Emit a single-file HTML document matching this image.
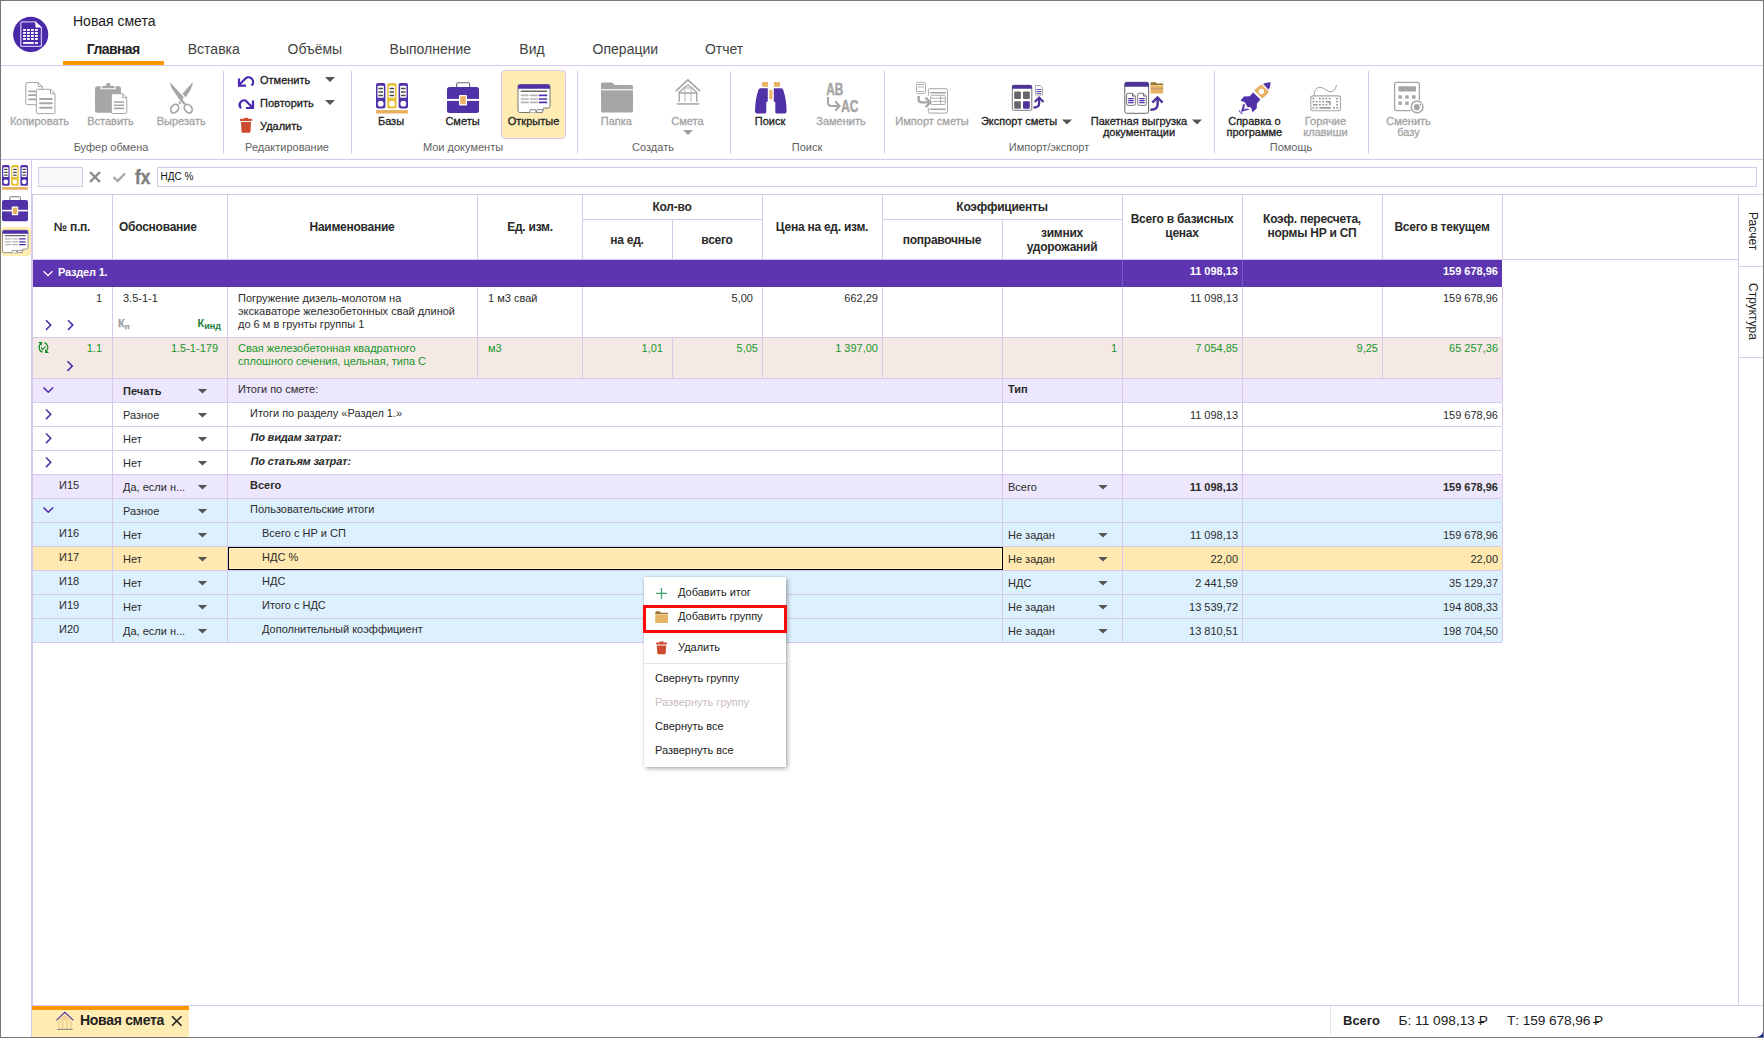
<!DOCTYPE html><html><head><meta charset="utf-8"><title>Новая смета</title><style>
html,body{margin:0;padding:0;}
body{width:1764px;height:1038px;overflow:hidden;position:relative;background:#fff;font-family:"Liberation Sans",sans-serif;}
.a{position:absolute;}
.t{position:absolute;white-space:nowrap;}
.rub{position:relative;display:inline-block;}
.rub::after{content:'';position:absolute;left:-0.6px;width:5.6px;top:9.6px;height:1.1px;background:currentColor;}
svg.ic{position:absolute;left:0;top:0;}
</style></head><body><div class="a" style="left:0px;top:0px;width:1764px;height:1038px;background:#fff;"></div><div class="t" style="left:73px;top:12.75px;font-size:14px;line-height:17px;font-weight:400;color:#212121;">Новая смета</div><div class="t" style="left:53.2px;width:120px;text-align:center;top:40.75px;font-size:14px;line-height:17px;font-weight:700;color:#212121;letter-spacing:-0.6px;">Главная</div><div class="t" style="left:153.8px;width:120px;text-align:center;top:40.75px;font-size:14px;line-height:17px;font-weight:400;color:#424242;">Вставка</div><div class="t" style="left:254.85000000000002px;width:120px;text-align:center;top:40.75px;font-size:14px;line-height:17px;font-weight:400;color:#424242;">Объёмы</div><div class="t" style="left:370.35px;width:120px;text-align:center;top:40.75px;font-size:14px;line-height:17px;font-weight:400;color:#424242;">Выполнение</div><div class="t" style="left:472.0px;width:120px;text-align:center;top:40.75px;font-size:14px;line-height:17px;font-weight:400;color:#424242;">Вид</div><div class="t" style="left:565.35px;width:120px;text-align:center;top:40.75px;font-size:14px;line-height:17px;font-weight:400;color:#424242;">Операции</div><div class="t" style="left:664.05px;width:120px;text-align:center;top:40.75px;font-size:14px;line-height:17px;font-weight:400;color:#424242;">Отчет</div><div class="a" style="left:63px;top:61px;width:101px;height:4px;background:#ff9800;"></div><div class="a" style="left:1px;top:65px;width:1762px;height:1px;background:#d6c9ec;"></div><div class="a" style="left:1px;top:159px;width:1762px;height:1px;background:#d6c9ec;"></div><div class="a" style="left:223px;top:71px;width:1px;height:83px;background:#d6c9ec;"></div><div class="a" style="left:351px;top:71px;width:1px;height:83px;background:#d6c9ec;"></div><div class="a" style="left:577px;top:71px;width:1px;height:83px;background:#d6c9ec;"></div><div class="a" style="left:730px;top:71px;width:1px;height:83px;background:#d6c9ec;"></div><div class="a" style="left:884px;top:71px;width:1px;height:83px;background:#d6c9ec;"></div><div class="a" style="left:1214px;top:71px;width:1px;height:83px;background:#d6c9ec;"></div><div class="a" style="left:1368px;top:71px;width:1px;height:83px;background:#d6c9ec;"></div><div class="t" style="left:31.0px;width:160px;text-align:center;top:140.75px;font-size:11px;line-height:13px;font-weight:400;color:#616161;">Буфер обмена</div><div class="t" style="left:207.0px;width:160px;text-align:center;top:140.75px;font-size:11px;line-height:13px;font-weight:400;color:#616161;">Редактирование</div><div class="t" style="left:383.0px;width:160px;text-align:center;top:140.75px;font-size:11px;line-height:13px;font-weight:400;color:#616161;">Мои документы</div><div class="t" style="left:573.0px;width:160px;text-align:center;top:140.75px;font-size:11px;line-height:13px;font-weight:400;color:#616161;">Создать</div><div class="t" style="left:727.0px;width:160px;text-align:center;top:140.75px;font-size:11px;line-height:13px;font-weight:400;color:#616161;">Поиск</div><div class="t" style="left:969.0px;width:160px;text-align:center;top:140.75px;font-size:11px;line-height:13px;font-weight:400;color:#616161;">Импорт/экспорт</div><div class="t" style="left:1211.0px;width:160px;text-align:center;top:140.75px;font-size:11px;line-height:13px;font-weight:400;color:#616161;">Помощь</div><div class="t" style="left:-30.5px;width:140px;text-align:center;top:114.75px;font-size:11px;line-height:13px;font-weight:400;color:#a3a3a3;-webkit-text-stroke:0.3px #a3a3a3;">Копировать</div><div class="t" style="left:40.5px;width:140px;text-align:center;top:114.75px;font-size:11px;line-height:13px;font-weight:400;color:#a3a3a3;-webkit-text-stroke:0.3px #a3a3a3;">Вставить</div><div class="t" style="left:111.19999999999999px;width:140px;text-align:center;top:114.75px;font-size:11px;line-height:13px;font-weight:400;color:#a3a3a3;-webkit-text-stroke:0.3px #a3a3a3;">Вырезать</div><div class="t" style="left:321.0px;width:140px;text-align:center;top:114.75px;font-size:11px;line-height:13px;font-weight:400;color:#212121;-webkit-text-stroke:0.3px #212121;">Базы</div><div class="t" style="left:392.5px;width:140px;text-align:center;top:114.75px;font-size:11px;line-height:13px;font-weight:400;color:#212121;-webkit-text-stroke:0.3px #212121;">Сметы</div><div class="a" style="left:501px;top:70px;width:65px;height:69px;background:#ffecb3;border:1px solid #d8c8ee;border-radius:4px;box-sizing:border-box;"></div><div class="t" style="left:463.5px;width:140px;text-align:center;top:114.75px;font-size:11px;line-height:13px;font-weight:400;color:#212121;-webkit-text-stroke:0.3px #212121;">Открытые</div><div class="t" style="left:546.4px;width:140px;text-align:center;top:114.75px;font-size:11px;line-height:13px;font-weight:400;color:#a3a3a3;-webkit-text-stroke:0.3px #a3a3a3;">Папка</div><div class="t" style="left:617.5px;width:140px;text-align:center;top:114.75px;font-size:11px;line-height:13px;font-weight:400;color:#a3a3a3;-webkit-text-stroke:0.3px #a3a3a3;">Смета</div><div class="t" style="left:700.0px;width:140px;text-align:center;top:114.75px;font-size:11px;line-height:13px;font-weight:400;color:#212121;-webkit-text-stroke:0.3px #212121;">Поиск</div><div class="t" style="left:771.0px;width:140px;text-align:center;top:114.75px;font-size:11px;line-height:13px;font-weight:400;color:#a3a3a3;-webkit-text-stroke:0.3px #a3a3a3;">Заменить</div><div class="t" style="left:862.0px;width:140px;text-align:center;top:114.75px;font-size:11px;line-height:13px;font-weight:400;color:#a3a3a3;-webkit-text-stroke:0.3px #a3a3a3;">Импорт сметы</div><div class="t" style="left:949.0px;width:140px;text-align:center;top:114.75px;font-size:11px;line-height:13px;font-weight:400;color:#212121;-webkit-text-stroke:0.3px #212121;">Экспорт сметы</div><div class="t" style="left:1069.0px;width:140px;text-align:center;top:114.75px;font-size:11px;line-height:13px;font-weight:400;color:#212121;-webkit-text-stroke:0.3px #212121;">Пакетная выгрузка</div><div class="t" style="left:1069.0px;width:140px;text-align:center;top:125.75px;font-size:11px;line-height:13px;font-weight:400;color:#212121;-webkit-text-stroke:0.3px #212121;">документации</div><div class="t" style="left:1184.4px;width:140px;text-align:center;top:114.75px;font-size:11px;line-height:13px;font-weight:400;color:#212121;-webkit-text-stroke:0.3px #212121;">Справка о</div><div class="t" style="left:1184.4px;width:140px;text-align:center;top:125.75px;font-size:11px;line-height:13px;font-weight:400;color:#212121;-webkit-text-stroke:0.3px #212121;">программе</div><div class="t" style="left:1255.5px;width:140px;text-align:center;top:114.75px;font-size:11px;line-height:13px;font-weight:400;color:#a3a3a3;-webkit-text-stroke:0.3px #a3a3a3;">Горячие</div><div class="t" style="left:1255.5px;width:140px;text-align:center;top:125.75px;font-size:11px;line-height:13px;font-weight:400;color:#a3a3a3;-webkit-text-stroke:0.3px #a3a3a3;">клавиши</div><div class="t" style="left:1338.5px;width:140px;text-align:center;top:114.75px;font-size:11px;line-height:13px;font-weight:400;color:#a3a3a3;-webkit-text-stroke:0.3px #a3a3a3;">Сменить</div><div class="t" style="left:1338.5px;width:140px;text-align:center;top:125.75px;font-size:11px;line-height:13px;font-weight:400;color:#a3a3a3;-webkit-text-stroke:0.3px #a3a3a3;">базу</div><div class="t" style="left:260px;top:73.75px;font-size:11px;line-height:13px;font-weight:400;color:#212121;-webkit-text-stroke:0.3px #212121;">Отменить</div><div class="t" style="left:260px;top:96.75px;font-size:11px;line-height:13px;font-weight:400;color:#212121;-webkit-text-stroke:0.3px #212121;">Повторить</div><div class="t" style="left:260px;top:119.75px;font-size:11px;line-height:13px;font-weight:400;color:#212121;-webkit-text-stroke:0.3px #212121;">Удалить</div><div class="a" style="left:31px;top:160px;width:1px;height:878px;background:#d6c9ec;"></div><div class="a" style="left:1px;top:226.5px;width:29.5px;height:29.5px;background:#ffecb3;border-radius:4px;"></div><div class="a" style="left:38px;top:167px;width:45px;height:20px;background:#f8f8f8;border:1px solid #d6c9ec;box-sizing:border-box;"></div><div class="a" style="left:157px;top:167px;width:1600px;height:20px;background:#fff;border:1px solid #d6c9ec;box-sizing:border-box;"></div><div class="t" style="left:160.5px;top:170.75px;font-size:10px;line-height:12px;font-weight:400;color:#111;">НДС %</div><div class="a" style="left:32px;top:194px;width:1732px;height:1px;background:#d6c9ec;"></div><div class="a" style="left:32px;top:194px;width:1px;height:811px;background:#d6c9ec;"></div><div class="a" style="left:1738px;top:194px;width:1px;height:811px;background:#d6c9ec;"></div><div class="a" style="left:32px;top:259px;width:1706px;height:1px;background:#d6c9ec;"></div><div class="a" style="left:1738px;top:266px;width:26px;height:1px;background:#d6c9ec;"></div><div class="a" style="left:1738px;top:357px;width:26px;height:1px;background:#d6c9ec;"></div><div class="t" style="left:1752.5px;top:-10.25px;font-size:11px;line-height:13px;font-weight:400;color:#212121;"></div><div class="t" style="left:1742px;top:211.5px;width:22px;height:40px;font-size:12px;line-height:22px;color:#212121;writing-mode:vertical-rl;">Расчет</div><div class="t" style="left:1742px;top:283px;width:22px;height:70px;font-size:12px;line-height:22px;color:#212121;writing-mode:vertical-rl;">Структура</div><div class="a" style="left:112px;top:194px;width:1px;height:65px;background:#d6c9ec;"></div><div class="a" style="left:227px;top:194px;width:1px;height:65px;background:#d6c9ec;"></div><div class="a" style="left:477px;top:194px;width:1px;height:65px;background:#d6c9ec;"></div><div class="a" style="left:582px;top:194px;width:1px;height:65px;background:#d6c9ec;"></div><div class="a" style="left:672px;top:219px;width:1px;height:40px;background:#d6c9ec;"></div><div class="a" style="left:762px;top:194px;width:1px;height:65px;background:#d6c9ec;"></div><div class="a" style="left:882px;top:194px;width:1px;height:65px;background:#d6c9ec;"></div><div class="a" style="left:1002px;top:219px;width:1px;height:40px;background:#d6c9ec;"></div><div class="a" style="left:1122px;top:194px;width:1px;height:65px;background:#d6c9ec;"></div><div class="a" style="left:1242px;top:194px;width:1px;height:65px;background:#d6c9ec;"></div><div class="a" style="left:1382px;top:194px;width:1px;height:65px;background:#d6c9ec;"></div><div class="a" style="left:1502px;top:194px;width:1px;height:65px;background:#d6c9ec;"></div><div class="a" style="left:582px;top:219px;width:180px;height:1px;background:#d6c9ec;"></div><div class="a" style="left:882px;top:219px;width:240px;height:1px;background:#d6c9ec;"></div><div class="t" style="left:-28.0px;width:200px;text-align:center;top:220.25px;font-size:12px;line-height:14px;font-weight:700;color:#2a2a2a;letter-spacing:-0.25px;">№ п.п.</div><div class="t" style="left:119px;top:220.25px;font-size:12px;line-height:14px;font-weight:700;color:#2a2a2a;letter-spacing:-0.25px;">Обоснование</div><div class="t" style="left:252.0px;width:200px;text-align:center;top:220.25px;font-size:12px;line-height:14px;font-weight:700;color:#2a2a2a;letter-spacing:-0.25px;">Наименование</div><div class="t" style="left:430.0px;width:200px;text-align:center;top:220.25px;font-size:12px;line-height:14px;font-weight:700;color:#2a2a2a;letter-spacing:-0.25px;">Ед. изм.</div><div class="t" style="left:572.0px;width:200px;text-align:center;top:200.25px;font-size:12px;line-height:14px;font-weight:700;color:#2a2a2a;letter-spacing:-0.25px;">Кол-во</div><div class="t" style="left:527.0px;width:200px;text-align:center;top:233.25px;font-size:12px;line-height:14px;font-weight:700;color:#2a2a2a;letter-spacing:-0.25px;">на ед.</div><div class="t" style="left:617.0px;width:200px;text-align:center;top:233.25px;font-size:12px;line-height:14px;font-weight:700;color:#2a2a2a;letter-spacing:-0.25px;">всего</div><div class="t" style="left:722.0px;width:200px;text-align:center;top:220.25px;font-size:12px;line-height:14px;font-weight:700;color:#2a2a2a;letter-spacing:-0.25px;">Цена на ед. изм.</div><div class="t" style="left:902.0px;width:200px;text-align:center;top:200.25px;font-size:12px;line-height:14px;font-weight:700;color:#2a2a2a;letter-spacing:-0.25px;">Коэффициенты</div><div class="t" style="left:842.0px;width:200px;text-align:center;top:233.25px;font-size:12px;line-height:14px;font-weight:700;color:#2a2a2a;letter-spacing:-0.25px;">поправочные</div><div class="t" style="left:962.0px;width:200px;text-align:center;top:226.25px;font-size:12px;line-height:14px;font-weight:700;color:#2a2a2a;letter-spacing:-0.25px;">зимних</div><div class="t" style="left:962.0px;width:200px;text-align:center;top:240.25px;font-size:12px;line-height:14px;font-weight:700;color:#2a2a2a;letter-spacing:-0.25px;">удорожаний</div><div class="t" style="left:1082.0px;width:200px;text-align:center;top:212.25px;font-size:12px;line-height:14px;font-weight:700;color:#2a2a2a;letter-spacing:-0.25px;">Всего в базисных</div><div class="t" style="left:1082.0px;width:200px;text-align:center;top:226.25px;font-size:12px;line-height:14px;font-weight:700;color:#2a2a2a;letter-spacing:-0.25px;">ценах</div><div class="t" style="left:1212.0px;width:200px;text-align:center;top:212.25px;font-size:12px;line-height:14px;font-weight:700;color:#2a2a2a;letter-spacing:-0.25px;">Коэф. пересчета,</div><div class="t" style="left:1212.0px;width:200px;text-align:center;top:226.25px;font-size:12px;line-height:14px;font-weight:700;color:#2a2a2a;letter-spacing:-0.25px;">нормы НР и СП</div><div class="t" style="left:1342.0px;width:200px;text-align:center;top:220.25px;font-size:12px;line-height:14px;font-weight:700;color:#2a2a2a;letter-spacing:-0.25px;">Всего в текущем</div><div class="a" style="left:33px;top:260px;width:1469px;height:27px;background:#5e35b1;"></div><div class="t" style="left:58px;top:265.75px;font-size:11px;line-height:13px;font-weight:700;color:#fff;letter-spacing:-0.2px;">Раздел 1.</div><div class="t" style="right:526px;top:264.75px;font-size:11px;line-height:13px;font-weight:700;color:#fff;">11 098,13</div><div class="t" style="right:266px;top:264.75px;font-size:11px;line-height:13px;font-weight:700;color:#fff;">159 678,96</div><div class="a" style="left:1122px;top:260px;width:1px;height:27px;background:#7a5cc0;"></div><div class="a" style="left:1242px;top:260px;width:1px;height:27px;background:#7a5cc0;"></div><div class="a" style="left:112px;top:287px;width:1px;height:50px;background:#d6c9ec;"></div><div class="a" style="left:227px;top:287px;width:1px;height:50px;background:#d6c9ec;"></div><div class="a" style="left:477px;top:287px;width:1px;height:50px;background:#d6c9ec;"></div><div class="a" style="left:582px;top:287px;width:1px;height:50px;background:#d6c9ec;"></div><div class="a" style="left:762px;top:287px;width:1px;height:50px;background:#d6c9ec;"></div><div class="a" style="left:882px;top:287px;width:1px;height:50px;background:#d6c9ec;"></div><div class="a" style="left:1002px;top:287px;width:1px;height:50px;background:#d6c9ec;"></div><div class="a" style="left:1122px;top:287px;width:1px;height:50px;background:#d6c9ec;"></div><div class="a" style="left:1242px;top:287px;width:1px;height:50px;background:#d6c9ec;"></div><div class="a" style="left:1382px;top:287px;width:1px;height:50px;background:#d6c9ec;"></div><div class="a" style="left:1502px;top:287px;width:1px;height:50px;background:#d6c9ec;"></div><div class="a" style="left:32px;top:337px;width:1470px;height:1px;background:#d6c9ec;"></div><div class="a" style="left:32px;top:378px;width:1470px;height:1px;background:#d6c9ec;"></div><div class="t" style="right:1662px;top:291.75px;font-size:11px;line-height:13px;font-weight:400;color:#2b2b2b;">1</div><div class="t" style="left:123px;top:291.75px;font-size:11px;line-height:13px;font-weight:400;color:#2b2b2b;">3.5-1-1</div><div class="t" style="left:118px;top:316.75px;font-size:11px;line-height:13px;font-weight:700;color:#9e9e9e;-webkit-text-stroke:0.25px #9e9e9e;">К<span style="font-size:8px;position:relative;top:2.5px">п</span></div><div class="t" style="right:1543px;top:316.75px;font-size:11px;line-height:13px;font-weight:700;color:#1b7d3c;">К<span style="font-size:9px;position:relative;top:2.2px">инд</span></div><div class="t" style="left:238px;top:291.75px;font-size:11px;line-height:13px;font-weight:400;color:#2b2b2b;">Погружение дизель-молотом на</div><div class="t" style="left:238px;top:304.75px;font-size:11px;line-height:13px;font-weight:400;color:#2b2b2b;">экскаваторе железобетонных свай длиной</div><div class="t" style="left:238px;top:317.75px;font-size:11px;line-height:13px;font-weight:400;color:#2b2b2b;">до 6 м в грунты группы 1</div><div class="t" style="left:488px;top:291.75px;font-size:11px;line-height:13px;font-weight:400;color:#2b2b2b;">1 м3 свай</div><div class="t" style="right:1011px;top:291.75px;font-size:11px;line-height:13px;font-weight:400;color:#2b2b2b;">5,00</div><div class="t" style="right:886px;top:291.75px;font-size:11px;line-height:13px;font-weight:400;color:#2b2b2b;">662,29</div><div class="t" style="right:526px;top:291.75px;font-size:11px;line-height:13px;font-weight:400;color:#2b2b2b;">11 098,13</div><div class="t" style="right:266px;top:291.75px;font-size:11px;line-height:13px;font-weight:400;color:#2b2b2b;">159 678,96</div><div class="a" style="left:33px;top:338px;width:1469px;height:40px;background:#f5e9e6;"></div><div class="a" style="left:112px;top:338px;width:1px;height:40px;background:#d6c9ec;"></div><div class="a" style="left:227px;top:338px;width:1px;height:40px;background:#d6c9ec;"></div><div class="a" style="left:477px;top:338px;width:1px;height:40px;background:#d6c9ec;"></div><div class="a" style="left:582px;top:338px;width:1px;height:40px;background:#d6c9ec;"></div><div class="a" style="left:672px;top:338px;width:1px;height:40px;background:#d6c9ec;"></div><div class="a" style="left:762px;top:338px;width:1px;height:40px;background:#d6c9ec;"></div><div class="a" style="left:882px;top:338px;width:1px;height:40px;background:#d6c9ec;"></div><div class="a" style="left:1002px;top:338px;width:1px;height:40px;background:#d6c9ec;"></div><div class="a" style="left:1122px;top:338px;width:1px;height:40px;background:#d6c9ec;"></div><div class="a" style="left:1242px;top:338px;width:1px;height:40px;background:#d6c9ec;"></div><div class="a" style="left:1382px;top:338px;width:1px;height:40px;background:#d6c9ec;"></div><div class="a" style="left:1502px;top:338px;width:1px;height:40px;background:#d6c9ec;"></div><div class="a" style="left:32px;top:378px;width:1470px;height:1px;background:#d6c9ec;"></div><div class="t" style="right:1662px;top:341.75px;font-size:11px;line-height:13px;font-weight:400;color:#15962a;">1.1</div><div class="t" style="right:1546px;top:341.75px;font-size:11px;line-height:13px;font-weight:400;color:#15962a;">1.5-1-179</div><div class="t" style="left:238px;top:341.75px;font-size:11px;line-height:13px;font-weight:400;color:#15962a;">Свая железобетонная квадратного</div><div class="t" style="left:238px;top:354.75px;font-size:11px;line-height:13px;font-weight:400;color:#15962a;">сплошного сечения, цельная, типа С</div><div class="t" style="left:488px;top:341.75px;font-size:11px;line-height:13px;font-weight:400;color:#15962a;">м3</div><div class="t" style="right:1101px;top:341.75px;font-size:11px;line-height:13px;font-weight:400;color:#15962a;">1,01</div><div class="t" style="right:1006px;top:341.75px;font-size:11px;line-height:13px;font-weight:400;color:#15962a;">5,05</div><div class="t" style="right:886px;top:341.75px;font-size:11px;line-height:13px;font-weight:400;color:#15962a;">1 397,00</div><div class="t" style="right:647px;top:341.75px;font-size:11px;line-height:13px;font-weight:400;color:#15962a;">1</div><div class="t" style="right:526px;top:341.75px;font-size:11px;line-height:13px;font-weight:400;color:#15962a;">7 054,85</div><div class="t" style="right:386px;top:341.75px;font-size:11px;line-height:13px;font-weight:400;color:#15962a;">9,25</div><div class="t" style="right:266px;top:341.75px;font-size:11px;line-height:13px;font-weight:400;color:#15962a;">65 257,36</div><div class="a" style="left:33px;top:379px;width:1469px;height:23px;background:#ece7fc;"></div><div class="a" style="left:32px;top:402px;width:1470px;height:1px;background:#d6c9ec;"></div><div class="a" style="left:112px;top:379px;width:1px;height:23px;background:#d6c9ec;"></div><div class="a" style="left:227px;top:379px;width:1px;height:23px;background:#d6c9ec;"></div><div class="a" style="left:1002px;top:379px;width:1px;height:23px;background:#d6c9ec;"></div><div class="a" style="left:1122px;top:379px;width:1px;height:23px;background:#d6c9ec;"></div><div class="a" style="left:1242px;top:379px;width:1px;height:23px;background:#d6c9ec;"></div><div class="a" style="left:1502px;top:379px;width:1px;height:23px;background:#d6c9ec;"></div><div class="t" style="left:123px;top:384.75px;font-size:11px;line-height:13px;font-weight:700;color:#2b2b2b;">Печать</div><div class="t" style="left:238px;top:382.75px;font-size:11px;line-height:13px;font-weight:400;color:#2b2b2b;">Итоги по смете:</div><div class="t" style="left:1008px;top:382.75px;font-size:11px;line-height:13px;font-weight:700;color:#2b2b2b;">Тип</div><div class="a" style="left:32px;top:426px;width:1470px;height:1px;background:#d6c9ec;"></div><div class="a" style="left:112px;top:403px;width:1px;height:23px;background:#d6c9ec;"></div><div class="a" style="left:227px;top:403px;width:1px;height:23px;background:#d6c9ec;"></div><div class="a" style="left:1002px;top:403px;width:1px;height:23px;background:#d6c9ec;"></div><div class="a" style="left:1122px;top:403px;width:1px;height:23px;background:#d6c9ec;"></div><div class="a" style="left:1242px;top:403px;width:1px;height:23px;background:#d6c9ec;"></div><div class="a" style="left:1502px;top:403px;width:1px;height:23px;background:#d6c9ec;"></div><div class="t" style="left:123px;top:408.75px;font-size:11px;line-height:13px;font-weight:400;color:#2b2b2b;">Разное</div><div class="t" style="left:250px;top:406.75px;font-size:11px;line-height:13px;font-weight:400;color:#2b2b2b;">Итоги по разделу «Раздел 1.»</div><div class="t" style="right:526px;top:408.75px;font-size:11px;line-height:13px;font-weight:400;color:#2b2b2b;">11 098,13</div><div class="t" style="right:266px;top:408.75px;font-size:11px;line-height:13px;font-weight:400;color:#2b2b2b;">159 678,96</div><div class="a" style="left:32px;top:450px;width:1470px;height:1px;background:#d6c9ec;"></div><div class="a" style="left:112px;top:427px;width:1px;height:23px;background:#d6c9ec;"></div><div class="a" style="left:227px;top:427px;width:1px;height:23px;background:#d6c9ec;"></div><div class="a" style="left:1002px;top:427px;width:1px;height:23px;background:#d6c9ec;"></div><div class="a" style="left:1122px;top:427px;width:1px;height:23px;background:#d6c9ec;"></div><div class="a" style="left:1242px;top:427px;width:1px;height:23px;background:#d6c9ec;"></div><div class="a" style="left:1502px;top:427px;width:1px;height:23px;background:#d6c9ec;"></div><div class="t" style="left:123px;top:432.75px;font-size:11px;line-height:13px;font-weight:400;color:#2b2b2b;">Нет</div><div class="t" style="left:250px;top:430.75px;font-size:11px;line-height:13px;font-weight:700;color:#2b2b2b;transform:skewX(-11deg);transform-origin:0 78%;letter-spacing:-0.2px;">По видам затрат:</div><div class="a" style="left:32px;top:474px;width:1470px;height:1px;background:#d6c9ec;"></div><div class="a" style="left:112px;top:451px;width:1px;height:23px;background:#d6c9ec;"></div><div class="a" style="left:227px;top:451px;width:1px;height:23px;background:#d6c9ec;"></div><div class="a" style="left:1002px;top:451px;width:1px;height:23px;background:#d6c9ec;"></div><div class="a" style="left:1122px;top:451px;width:1px;height:23px;background:#d6c9ec;"></div><div class="a" style="left:1242px;top:451px;width:1px;height:23px;background:#d6c9ec;"></div><div class="a" style="left:1502px;top:451px;width:1px;height:23px;background:#d6c9ec;"></div><div class="t" style="left:123px;top:456.75px;font-size:11px;line-height:13px;font-weight:400;color:#2b2b2b;">Нет</div><div class="t" style="left:250px;top:454.75px;font-size:11px;line-height:13px;font-weight:700;color:#2b2b2b;transform:skewX(-11deg);transform-origin:0 78%;letter-spacing:-0.2px;">По статьям затрат:</div><div class="a" style="left:33px;top:475px;width:1469px;height:23px;background:#ece7fc;"></div><div class="a" style="left:32px;top:498px;width:1470px;height:1px;background:#d6c9ec;"></div><div class="a" style="left:112px;top:475px;width:1px;height:23px;background:#d6c9ec;"></div><div class="a" style="left:227px;top:475px;width:1px;height:23px;background:#d6c9ec;"></div><div class="a" style="left:1002px;top:475px;width:1px;height:23px;background:#d6c9ec;"></div><div class="a" style="left:1122px;top:475px;width:1px;height:23px;background:#d6c9ec;"></div><div class="a" style="left:1242px;top:475px;width:1px;height:23px;background:#d6c9ec;"></div><div class="a" style="left:1502px;top:475px;width:1px;height:23px;background:#d6c9ec;"></div><div class="t" style="left:59px;top:478.75px;font-size:11px;line-height:13px;font-weight:400;color:#2b2b2b;">И15</div><div class="t" style="left:123px;top:480.75px;font-size:11px;line-height:13px;font-weight:400;color:#2b2b2b;">Да, если н...</div><div class="t" style="left:250px;top:478.75px;font-size:11px;line-height:13px;font-weight:700;color:#2b2b2b;">Всего</div><div class="t" style="left:1008px;top:480.75px;font-size:11px;line-height:13px;font-weight:400;color:#2b2b2b;">Всего</div><div class="t" style="right:526px;top:480.75px;font-size:11px;line-height:13px;font-weight:700;color:#2b2b2b;">11 098,13</div><div class="t" style="right:266px;top:480.75px;font-size:11px;line-height:13px;font-weight:700;color:#2b2b2b;">159 678,96</div><div class="a" style="left:33px;top:499px;width:1469px;height:23px;background:#ddf0fd;"></div><div class="a" style="left:32px;top:522px;width:1470px;height:1px;background:#d6c9ec;"></div><div class="a" style="left:112px;top:499px;width:1px;height:23px;background:#d6c9ec;"></div><div class="a" style="left:227px;top:499px;width:1px;height:23px;background:#d6c9ec;"></div><div class="a" style="left:1002px;top:499px;width:1px;height:23px;background:#d6c9ec;"></div><div class="a" style="left:1122px;top:499px;width:1px;height:23px;background:#d6c9ec;"></div><div class="a" style="left:1242px;top:499px;width:1px;height:23px;background:#d6c9ec;"></div><div class="a" style="left:1502px;top:499px;width:1px;height:23px;background:#d6c9ec;"></div><div class="t" style="left:123px;top:504.75px;font-size:11px;line-height:13px;font-weight:400;color:#2b2b2b;">Разное</div><div class="t" style="left:250px;top:502.75px;font-size:11px;line-height:13px;font-weight:400;color:#2b2b2b;">Пользовательские итоги</div><div class="a" style="left:33px;top:523px;width:1469px;height:23px;background:#ddf0fd;"></div><div class="a" style="left:32px;top:546px;width:1470px;height:1px;background:#d6c9ec;"></div><div class="a" style="left:112px;top:523px;width:1px;height:23px;background:#d6c9ec;"></div><div class="a" style="left:227px;top:523px;width:1px;height:23px;background:#d6c9ec;"></div><div class="a" style="left:1002px;top:523px;width:1px;height:23px;background:#d6c9ec;"></div><div class="a" style="left:1122px;top:523px;width:1px;height:23px;background:#d6c9ec;"></div><div class="a" style="left:1242px;top:523px;width:1px;height:23px;background:#d6c9ec;"></div><div class="a" style="left:1502px;top:523px;width:1px;height:23px;background:#d6c9ec;"></div><div class="t" style="left:59px;top:526.75px;font-size:11px;line-height:13px;font-weight:400;color:#2b2b2b;">И16</div><div class="t" style="left:123px;top:528.75px;font-size:11px;line-height:13px;font-weight:400;color:#2b2b2b;">Нет</div><div class="t" style="left:262px;top:526.75px;font-size:11px;line-height:13px;font-weight:400;color:#2b2b2b;">Всего с НР и СП</div><div class="t" style="left:1008px;top:528.75px;font-size:11px;line-height:13px;font-weight:400;color:#2b2b2b;">Не задан</div><div class="t" style="right:526px;top:528.75px;font-size:11px;line-height:13px;font-weight:400;color:#2b2b2b;">11 098,13</div><div class="t" style="right:266px;top:528.75px;font-size:11px;line-height:13px;font-weight:400;color:#2b2b2b;">159 678,96</div><div class="a" style="left:33px;top:547px;width:1469px;height:23px;background:#ffe9b0;"></div><div class="a" style="left:32px;top:570px;width:1470px;height:1px;background:#d6c9ec;"></div><div class="a" style="left:112px;top:547px;width:1px;height:23px;background:#d6c9ec;"></div><div class="a" style="left:227px;top:547px;width:1px;height:23px;background:#d6c9ec;"></div><div class="a" style="left:1002px;top:547px;width:1px;height:23px;background:#d6c9ec;"></div><div class="a" style="left:1122px;top:547px;width:1px;height:23px;background:#d6c9ec;"></div><div class="a" style="left:1242px;top:547px;width:1px;height:23px;background:#d6c9ec;"></div><div class="a" style="left:1502px;top:547px;width:1px;height:23px;background:#d6c9ec;"></div><div class="t" style="left:59px;top:550.75px;font-size:11px;line-height:13px;font-weight:400;color:#2b2b2b;">И17</div><div class="t" style="left:123px;top:552.75px;font-size:11px;line-height:13px;font-weight:400;color:#2b2b2b;">Нет</div><div class="t" style="left:262px;top:550.75px;font-size:11px;line-height:13px;font-weight:400;color:#2b2b2b;">НДС %</div><div class="t" style="left:1008px;top:552.75px;font-size:11px;line-height:13px;font-weight:400;color:#2b2b2b;">Не задан</div><div class="t" style="right:526px;top:552.75px;font-size:11px;line-height:13px;font-weight:400;color:#2b2b2b;">22,00</div><div class="t" style="right:266px;top:552.75px;font-size:11px;line-height:13px;font-weight:400;color:#2b2b2b;">22,00</div><div class="a" style="left:33px;top:571px;width:1469px;height:23px;background:#ddf0fd;"></div><div class="a" style="left:32px;top:594px;width:1470px;height:1px;background:#d6c9ec;"></div><div class="a" style="left:112px;top:571px;width:1px;height:23px;background:#d6c9ec;"></div><div class="a" style="left:227px;top:571px;width:1px;height:23px;background:#d6c9ec;"></div><div class="a" style="left:1002px;top:571px;width:1px;height:23px;background:#d6c9ec;"></div><div class="a" style="left:1122px;top:571px;width:1px;height:23px;background:#d6c9ec;"></div><div class="a" style="left:1242px;top:571px;width:1px;height:23px;background:#d6c9ec;"></div><div class="a" style="left:1502px;top:571px;width:1px;height:23px;background:#d6c9ec;"></div><div class="t" style="left:59px;top:574.75px;font-size:11px;line-height:13px;font-weight:400;color:#2b2b2b;">И18</div><div class="t" style="left:123px;top:576.75px;font-size:11px;line-height:13px;font-weight:400;color:#2b2b2b;">Нет</div><div class="t" style="left:262px;top:574.75px;font-size:11px;line-height:13px;font-weight:400;color:#2b2b2b;">НДС</div><div class="t" style="left:1008px;top:576.75px;font-size:11px;line-height:13px;font-weight:400;color:#2b2b2b;">НДС</div><div class="t" style="right:526px;top:576.75px;font-size:11px;line-height:13px;font-weight:400;color:#2b2b2b;">2 441,59</div><div class="t" style="right:266px;top:576.75px;font-size:11px;line-height:13px;font-weight:400;color:#2b2b2b;">35 129,37</div><div class="a" style="left:33px;top:595px;width:1469px;height:23px;background:#ddf0fd;"></div><div class="a" style="left:32px;top:618px;width:1470px;height:1px;background:#d6c9ec;"></div><div class="a" style="left:112px;top:595px;width:1px;height:23px;background:#d6c9ec;"></div><div class="a" style="left:227px;top:595px;width:1px;height:23px;background:#d6c9ec;"></div><div class="a" style="left:1002px;top:595px;width:1px;height:23px;background:#d6c9ec;"></div><div class="a" style="left:1122px;top:595px;width:1px;height:23px;background:#d6c9ec;"></div><div class="a" style="left:1242px;top:595px;width:1px;height:23px;background:#d6c9ec;"></div><div class="a" style="left:1502px;top:595px;width:1px;height:23px;background:#d6c9ec;"></div><div class="t" style="left:59px;top:598.75px;font-size:11px;line-height:13px;font-weight:400;color:#2b2b2b;">И19</div><div class="t" style="left:123px;top:600.75px;font-size:11px;line-height:13px;font-weight:400;color:#2b2b2b;">Нет</div><div class="t" style="left:262px;top:598.75px;font-size:11px;line-height:13px;font-weight:400;color:#2b2b2b;">Итого с НДС</div><div class="t" style="left:1008px;top:600.75px;font-size:11px;line-height:13px;font-weight:400;color:#2b2b2b;">Не задан</div><div class="t" style="right:526px;top:600.75px;font-size:11px;line-height:13px;font-weight:400;color:#2b2b2b;">13 539,72</div><div class="t" style="right:266px;top:600.75px;font-size:11px;line-height:13px;font-weight:400;color:#2b2b2b;">194 808,33</div><div class="a" style="left:33px;top:619px;width:1469px;height:23px;background:#ddf0fd;"></div><div class="a" style="left:32px;top:642px;width:1470px;height:1px;background:#d6c9ec;"></div><div class="a" style="left:112px;top:619px;width:1px;height:23px;background:#d6c9ec;"></div><div class="a" style="left:227px;top:619px;width:1px;height:23px;background:#d6c9ec;"></div><div class="a" style="left:1002px;top:619px;width:1px;height:23px;background:#d6c9ec;"></div><div class="a" style="left:1122px;top:619px;width:1px;height:23px;background:#d6c9ec;"></div><div class="a" style="left:1242px;top:619px;width:1px;height:23px;background:#d6c9ec;"></div><div class="a" style="left:1502px;top:619px;width:1px;height:23px;background:#d6c9ec;"></div><div class="t" style="left:59px;top:622.75px;font-size:11px;line-height:13px;font-weight:400;color:#2b2b2b;">И20</div><div class="t" style="left:123px;top:624.75px;font-size:11px;line-height:13px;font-weight:400;color:#2b2b2b;">Да, если н...</div><div class="t" style="left:262px;top:622.75px;font-size:11px;line-height:13px;font-weight:400;color:#2b2b2b;">Дополнительный коэффициент</div><div class="t" style="left:1008px;top:624.75px;font-size:11px;line-height:13px;font-weight:400;color:#2b2b2b;">Не задан</div><div class="t" style="right:526px;top:624.75px;font-size:11px;line-height:13px;font-weight:400;color:#2b2b2b;">13 810,51</div><div class="t" style="right:266px;top:624.75px;font-size:11px;line-height:13px;font-weight:400;color:#2b2b2b;">198 704,50</div><div class="a" style="left:228px;top:547px;width:775px;height:23px;background:transparent;border:1px solid #000;box-sizing:border-box;"></div><div class="a" style="left:229px;top:548px;width:773px;height:21px;background:transparent;border:1px solid #fff6c4;box-sizing:border-box;"></div><div class="a" style="left:644px;top:577px;width:142px;height:190px;background:#fff;box-shadow:1.5px 1.5px 5px rgba(0,0,0,0.32),0 0 2px rgba(0,0,0,0.18);"></div><div class="t" style="left:678px;top:585.75px;font-size:11px;line-height:13px;font-weight:400;color:#222;">Добавить итог</div><div class="t" style="left:678px;top:609.75px;font-size:11px;line-height:13px;font-weight:400;color:#222;">Добавить группу</div><div class="t" style="left:678px;top:640.75px;font-size:11px;line-height:13px;font-weight:400;color:#222;">Удалить</div><div class="a" style="left:644px;top:663px;width:142px;height:1px;background:#e3e3e3;"></div><div class="t" style="left:655px;top:671.75px;font-size:11px;line-height:13px;font-weight:400;color:#222;">Свернуть группу</div><div class="t" style="left:655px;top:695.75px;font-size:11px;line-height:13px;font-weight:400;color:#cbbdbd;">Развернуть группу</div><div class="t" style="left:655px;top:719.75px;font-size:11px;line-height:13px;font-weight:400;color:#222;">Свернуть все</div><div class="t" style="left:655px;top:743.75px;font-size:11px;line-height:13px;font-weight:400;color:#222;">Развернуть все</div><div class="a" style="left:642.6px;top:604.6px;width:144px;height:28px;background:transparent;border:3px solid #ff0a0a;box-sizing:border-box;"></div><div class="a" style="left:32px;top:1005px;width:1732px;height:1px;background:#d6c9ec;"></div><div class="a" style="left:32px;top:1006px;width:157px;height:4px;background:#ff9800;"></div><div class="a" style="left:32px;top:1010px;width:157px;height:27px;background:#ffecb3;"></div><div class="t" style="left:80px;top:1011.75px;font-size:14px;line-height:17px;font-weight:700;color:#222;letter-spacing:-0.3px;">Новая смета</div><div class="a" style="left:1330px;top:1006px;width:1px;height:28px;background:#e0e0e0;"></div><div class="t" style="left:1343px;top:1012.75px;font-size:13px;line-height:16px;font-weight:700;color:#222;">Всего</div><div class="t" style="left:1398.5px;top:1012.75px;font-size:13.7px;line-height:16px;font-weight:400;color:#222;">Б: 11 098,13 <span class="rub">Р</span></div><div class="t" style="left:1507px;top:1012.75px;font-size:13.7px;line-height:16px;font-weight:400;color:#222;letter-spacing:-0.09px;">Т: 159 678,96 <span class="rub">Р</span></div><div class="a" style="left:0;top:0;width:1764px;height:1038px;border:1px solid #777;box-sizing:border-box;"></div><svg class="ic" width="1764" height="1038" viewBox="0 0 1764 1038"><circle cx="30.7" cy="34.4" r="17.6" fill="#4b2aaa"/><path d="M20.8 22.8 Q20.8 21.8 21.8 21.8 H35.2 L41.4 27.8 V45.6 Q41.4 46.4 40.6 46.4 H21.8 Q20.8 46.4 20.8 45.4 Z" fill="none" stroke="#c8bbee" stroke-width="1.3"/><path d="M35 21.2 L35.6 27.6 L42 27.6 Z" fill="#fff"/><rect x="23.1" y="29" width="2.8" height="1.9" fill="#fff"/><rect x="27" y="29" width="2.8" height="1.9" fill="#fff"/><rect x="31" y="29" width="2.8" height="1.9" fill="#fff"/><rect x="35" y="29" width="2.8" height="1.9" fill="#fff"/><rect x="23.1" y="32" width="2.8" height="1.9" fill="#fff"/><rect x="27" y="32" width="2.8" height="1.9" fill="#fff"/><rect x="31" y="32" width="2.8" height="1.9" fill="#fff"/><rect x="35" y="32" width="2.8" height="1.9" fill="#fff"/><rect x="23.1" y="35" width="2.8" height="1.9" fill="#fff"/><rect x="27" y="35" width="2.8" height="1.9" fill="#fff"/><rect x="31" y="35" width="2.8" height="1.9" fill="#fff"/><rect x="35" y="35" width="2.8" height="1.9" fill="#fff"/><rect x="23.1" y="38" width="2.8" height="1.9" fill="#fff"/><rect x="27" y="38" width="2.8" height="1.9" fill="#fff"/><rect x="31" y="38" width="2.8" height="1.9" fill="#fff"/><rect x="35" y="38" width="2.8" height="1.9" fill="#fff"/><rect x="23.1" y="42" width="10.7" height="1.9" fill="#fff"/><rect x="35" y="42" width="2.8" height="1.9" fill="#fff"/><path d="M325.0 77.0 H335.0 L330 82.0 Z" fill="#555"/><path d="M325.0 100.0 H335.0 L330 105.0 Z" fill="#555"/><path d="M683.0 130.0 H693.0 L688 135.0 Z" fill="#9e9e9e"/><path d="M1062.0 119.5 H1072.0 L1067 124.5 Z" fill="#555"/><path d="M1192.0 119.5 H1202.0 L1197 124.5 Z" fill="#555"/><path d="M27.3 82.6 H38.3 L42.3 86.6 V103.1 Q42.3 104.6 40.8 104.6 H27.3 Q25.8 104.6 25.8 103.1 V84.1 Q25.8 82.6 27.3 82.6 Z" fill="#fff" stroke="#a6a6a6" stroke-width="1"/><path d="M38.3 82.6 V86.6 H42.3" fill="none" stroke="#a6a6a6" stroke-width="1"/><line x1="29" y1="91.3" x2="35.3" y2="91.3" stroke="#a6a6a6" stroke-width="1.8" stroke-linecap="round"/><line x1="29" y1="95.2" x2="35.3" y2="95.2" stroke="#a6a6a6" stroke-width="1.8" stroke-linecap="round"/><line x1="29" y1="99.3" x2="35.3" y2="99.3" stroke="#a6a6a6" stroke-width="1.8" stroke-linecap="round"/><path d="M37.8 89.3 H50.5 L55 93.8 V112.1 Q55 113.6 53.5 113.6 H37.8 Q36.3 113.6 36.3 112.1 V90.8 Q36.3 89.3 37.8 89.3 Z" fill="#fff" stroke="#a6a6a6" stroke-width="1"/><path d="M50.5 89.3 V93.8 H55" fill="none" stroke="#a6a6a6" stroke-width="1"/><line x1="40" y1="99" x2="51.8" y2="99" stroke="#a6a6a6" stroke-width="2" stroke-linecap="round"/><line x1="40" y1="103.3" x2="51.8" y2="103.3" stroke="#a6a6a6" stroke-width="2" stroke-linecap="round"/><line x1="40" y1="107.8" x2="51.8" y2="107.8" stroke="#a6a6a6" stroke-width="2" stroke-linecap="round"/><rect x="95" y="86.2" width="26" height="26.5" rx="2.5" fill="#a6a6a6"/><path d="M101 88.8 Q101 85.2 104.2 85.2 H105.6 Q105.8 82.2 108.2 82.2 Q110.6 82.2 110.8 85.2 H112.2 Q115.4 85.2 115.4 88.8 Z" fill="#a6a6a6" stroke="#fff" stroke-width="1.1"/><path d="M112.8 93.7 H122.8 L126.8 97.7 V112.0 Q126.8 113.5 125.3 113.5 H112.8 Q111.3 113.5 111.3 112.0 V95.2 Q111.3 93.7 112.8 93.7 Z" fill="#fff" stroke="#a6a6a6" stroke-width="1"/><path d="M122.8 93.7 V97.7 H126.8" fill="none" stroke="#a6a6a6" stroke-width="1"/><line x1="114.5" y1="102" x2="123.5" y2="102" stroke="#a6a6a6" stroke-width="1.6" stroke-linecap="round"/><line x1="114.5" y1="105.2" x2="123.5" y2="105.2" stroke="#a6a6a6" stroke-width="1.6" stroke-linecap="round"/><line x1="114.5" y1="108.4" x2="123.5" y2="108.4" stroke="#a6a6a6" stroke-width="1.6" stroke-linecap="round"/><path d="M169.8 81.9 L183.8 97.3 L182.4 99.4 L185.8 103.4 L184 104.8 L180 100.4 L171.2 87.6 Z" fill="#a6a6a6"/><path d="M192.8 82 Q192.6 88.5 185.3 97.4 L182.7 93.6 Z" fill="#a6a6a6"/><path d="M178.2 102.4 L180.1 104.4 L181.4 102.8 L179.7 101.2 Z" fill="#a6a6a6"/><ellipse cx="174.7" cy="108.6" rx="3.5" ry="4.7" transform="rotate(35 174.7 108.6)" fill="none" stroke="#a6a6a6" stroke-width="1.7"/><ellipse cx="188.2" cy="108.6" rx="3.5" ry="4.7" transform="rotate(-35 188.2 108.6)" fill="none" stroke="#a6a6a6" stroke-width="1.7"/><path d="M239 85 L245.5 78.5 A4.6 4.6 0 0 1 251.5 85.5" fill="none" stroke="#4a28b4" stroke-width="2.2"/><path d="M239 78.5 V85.7 H246" fill="none" stroke="#4a28b4" stroke-width="2.2"/><path d="M241 108.2 A4.6 4.6 0 0 1 245.5 100.5 L252 107" fill="none" stroke="#4a28b4" stroke-width="2.2"/><path d="M253 100.5 V108 H246" fill="none" stroke="#4a28b4" stroke-width="2.2"/><rect x="240" y="118.7" width="12" height="2.4" rx="1" fill="#cd4b2f"/><rect x="244" y="117.8" width="4" height="1.5" fill="#cd4b2f"/><path d="M241 122 H251 L250.5 131.3 Q250.4 132.8 249 132.8 H243 Q241.6 132.8 241.5 131.3 Z" fill="#cd4b2f"/><rect x="376.0" y="83" width="9.4" height="25.6" rx="2.0" fill="#5131a8"/><rect x="377.5" y="85.8" width="6.4" height="11.9" rx="1.0" fill="#fff"/><rect x="378.3" y="87.65" width="4.8" height="1.5" rx="0.6" fill="#4a4a4a"/><rect x="378.3" y="91.25" width="4.8" height="1.5" rx="0.6" fill="#4a4a4a"/><rect x="378.3" y="94.75" width="4.8" height="1.5" rx="0.6" fill="#4a4a4a"/><circle cx="380.7" cy="103.7" r="2.9" fill="#fff"/><rect x="387.2" y="83" width="9.4" height="25.6" rx="2.0" fill="#e9c136"/><rect x="388.7" y="85.8" width="6.4" height="11.9" rx="1.0" fill="#fff"/><rect x="389.5" y="87.65" width="4.8" height="1.5" rx="0.6" fill="#4a4a4a"/><rect x="389.5" y="91.25" width="4.8" height="1.5" rx="0.6" fill="#4a4a4a"/><rect x="389.5" y="94.75" width="4.8" height="1.5" rx="0.6" fill="#4a4a4a"/><circle cx="391.9" cy="103.7" r="2.9" fill="#fff"/><rect x="398.6" y="83" width="9.4" height="25.6" rx="2.0" fill="#5131a8"/><rect x="400.1" y="85.8" width="6.4" height="11.9" rx="1.0" fill="#fff"/><rect x="400.90000000000003" y="87.65" width="4.8" height="1.5" rx="0.6" fill="#4a4a4a"/><rect x="400.90000000000003" y="91.25" width="4.8" height="1.5" rx="0.6" fill="#4a4a4a"/><rect x="400.90000000000003" y="94.75" width="4.8" height="1.5" rx="0.6" fill="#4a4a4a"/><circle cx="403.3" cy="103.7" r="2.9" fill="#fff"/><rect x="376" y="110.0" width="32.0" height="3.6" rx="0.8" fill="#e8b061"/><path d="M456.6 86.89999999999999 V83.89999999999999 Q456.6 82.8 457.8 82.8 H468.4 Q469.6 82.8 469.6 83.89999999999999 V86.89999999999999" fill="none" stroke="#6a6a6a" stroke-width="1.1"/><rect x="447" y="87.0" width="32.0" height="26.0" rx="2.5" fill="#5131a8"/><rect x="447" y="98.9" width="32.0" height="2.0" fill="#fff"/><rect x="459.0" y="95.0" width="8.0" height="10.5" rx="0.8" fill="#fff"/><rect x="460.3" y="96.3" width="5.4" height="7.9" fill="#e8b061"/><path d="M518.00 86.30 Q518.00 84.50 519.80 84.50 H548.20 Q550.00 84.50 550.00 86.30 V106.50 Q550.00 108.10 548.00 108.10 H543.50 L542.30 112.50 H519.80 Q518.00 112.50 518.00 110.70 Z" fill="#fff" stroke="#777" stroke-width="1.0"/><path d="M518.00 88.80 V86.30 Q518.00 84.50 519.80 84.50 H548.20 Q550.00 84.50 550.00 86.30 V88.80 Z" fill="#5131a8"/><line x1="521.30" y1="91.30" x2="546.70" y2="91.30" stroke="#6a6a6a" stroke-width="1.50" stroke-linecap="round"/><line x1="521.50" y1="95.30" x2="528.00" y2="95.30" stroke="#b5b5b5" stroke-width="1.70" stroke-linecap="round"/><line x1="530.50" y1="95.30" x2="537.00" y2="95.30" stroke="#b5b5b5" stroke-width="1.70" stroke-linecap="round"/><line x1="539.50" y1="95.30" x2="546.50" y2="95.30" stroke="#5131a8" stroke-width="1.70" stroke-linecap="round"/><line x1="521.50" y1="99.00" x2="528.00" y2="99.00" stroke="#b5b5b5" stroke-width="1.70" stroke-linecap="round"/><line x1="530.50" y1="99.00" x2="537.00" y2="99.00" stroke="#b5b5b5" stroke-width="1.70" stroke-linecap="round"/><line x1="539.50" y1="99.00" x2="546.50" y2="99.00" stroke="#5131a8" stroke-width="1.70" stroke-linecap="round"/><line x1="521.50" y1="102.40" x2="528.00" y2="102.40" stroke="#b5b5b5" stroke-width="1.70" stroke-linecap="round"/><line x1="530.50" y1="102.40" x2="537.00" y2="102.40" stroke="#b5b5b5" stroke-width="1.70" stroke-linecap="round"/><line x1="539.50" y1="102.40" x2="546.50" y2="102.40" stroke="#5131a8" stroke-width="1.70" stroke-linecap="round"/><path d="M529.50 112.50 L530.30 109.70 H535.50 L536.30 112.50 M536.30 112.50 L537.00 109.70 H542.30 L542.90 111.50" fill="#fff" stroke="#777" stroke-width="0.90"/><path d="M601 84 Q601 82.4 602.6 82.4 H612 L615 85 H631.4 Q633 85 633 86.6 V110.9 Q633 112.5 631.4 112.5 H602.6 Q601 112.5 601 110.9 Z" fill="#a6a6a6"/><rect x="601" y="89.2" width="32" height="1.1" fill="#fff"/><path d="M675.8 91.2 L687.9 79.9 L700.1 91.2" fill="none" stroke="#a6a6a6" stroke-width="1.7"/><path d="M685 89 V101.8 M690.9 89 V101.8 M682.5 88 H693.5" fill="none" stroke="#cdcdcd" stroke-width="1.4"/><path d="M679.2 101.8 V92.2 L688 84.8 L696.7 92.2 V101.8 M679.2 93 H696.7" fill="none" stroke="#a6a6a6" stroke-width="1.4"/><rect x="676.9" y="103.2" width="22.2" height="1.5" fill="#a6a6a6"/><rect x="762.1" y="82.1" width="5.9" height="4.6" fill="#e8b061"/><rect x="773.9" y="82.1" width="6" height="4.6" fill="#e8b061"/><path d="M760.5 88.2 H767.8 V101.2 L766.3 102.2 V112 Q766.3 113.4 764.8 113.4 H756.6 Q755 113.4 755 111.6 Q755.2 99 758.2 90.5 Q758.8 88.2 760.5 88.2 Z" fill="#5131a8"/><path d="M781.1 88.2 H773.8 V101.2 L775.3 102.2 V112 Q775.3 113.4 776.8 113.4 H785 Q786.6 113.4 786.6 111.6 Q786.4 99 783.4 90.5 Q782.8 88.2 781.1 88.2 Z" fill="#5131a8"/><rect x="769.4" y="90" width="3" height="9.1" fill="#e8b061"/><text x="826.2" y="94.7" font-family="Liberation Sans" font-weight="700" font-size="16.5" fill="#a6a6a6" textLength="17" lengthAdjust="spacingAndGlyphs" stroke="#a6a6a6" stroke-width="0.6">AB</text><text x="841.2" y="111.7" font-family="Liberation Sans" font-weight="700" font-size="16.5" fill="#a6a6a6" textLength="17" lengthAdjust="spacingAndGlyphs" stroke="#a6a6a6" stroke-width="0.6">AC</text><path d="M828 97 V102.5 Q828 106 831.5 106 H839" fill="none" stroke="#a6a6a6" stroke-width="2"/><path d="M835.2 101.2 L839.6 106 L835.2 110.8" fill="none" stroke="#a6a6a6" stroke-width="2"/><rect x="916.6" y="82.3" width="8.8" height="11.3" rx="1.2" fill="#fff" stroke="#a6a6a6" stroke-width="0.9"/><line x1="918.4" y1="84.7" x2="923.6" y2="84.7" stroke="#a6a6a6" stroke-width="1" stroke-linecap="round"/><line x1="918.4" y1="91.4" x2="923.6" y2="91.4" stroke="#a6a6a6" stroke-width="1" stroke-linecap="round"/><line x1="918.4" y1="87.2" x2="923.6" y2="87.2" stroke="#c8c8c8" stroke-width="1.2" stroke-linecap="round"/><path d="M928.4 95.8 V90.3 Q928.4 88.7 930 88.7 H945.9 Q947.5 88.7 947.5 90.3 V111.5 Q947.5 113.1 945.9 113.1 H930 Q928.4 113.1 928.4 111.5 V108" fill="none" stroke="#a6a6a6" stroke-width="1"/><line x1="930.6" y1="92.7" x2="945.4" y2="92.7" stroke="#a6a6a6" stroke-width="1.5" stroke-linecap="round"/><line x1="930.6" y1="109.3" x2="945.4" y2="109.3" stroke="#a6a6a6" stroke-width="1.5" stroke-linecap="round"/><rect x="930.6" y="95.3" width="14.8" height="9.2" rx="1.3" fill="none" stroke="#a6a6a6" stroke-width="0.9"/><path d="M930.6 98.2 H945.4 M932.5 101.4 H945.4 M940.6 95.3 V104.5" fill="none" stroke="#a6a6a6" stroke-width="0.9"/><path d="M918.6 96 V99.6 Q918.6 102.4 922 102.4 H930" fill="none" stroke="#a6a6a6" stroke-width="2.4"/><path d="M925.6 97.6 L930.4 102.4 L925.6 107" fill="none" stroke="#a6a6a6" stroke-width="2.3"/><rect x="1012.3" y="85.3" width="19.5" height="25" rx="1.5" fill="#fff" stroke="#777" stroke-width="1"/><path d="M1013.8 85 H1030.3 Q1032 85 1032 86.7 V88.7 H1012 V86.7 Q1012 85 1013.8 85 Z" fill="#4f3497"/><rect x="1014.2" y="91.5" width="6.7" height="7.5" rx="1" fill="#67666c"/><rect x="1023" y="91.5" width="6.8" height="7.5" rx="1" fill="#67666c"/><rect x="1014.2" y="101.3" width="6.7" height="7.4" rx="1" fill="#67666c"/><rect x="1023" y="101.3" width="6.8" height="7.4" rx="1" fill="#4f3497"/><path d="M1035.4 85.6 H1040.4 L1042.4 87.6 V94.2 Q1042.4 95 1041.6 95 H1036.2 Q1035.4 95 1035.4 94.2 Z" fill="#fff" stroke="#8a8a8a" stroke-width="0.8"/><line x1="1036.9" y1="89.5" x2="1040.8" y2="89.5" stroke="#5131a8" stroke-width="0.9" stroke-linecap="round"/><line x1="1036.9" y1="91.5" x2="1040.8" y2="91.5" stroke="#5131a8" stroke-width="0.9" stroke-linecap="round"/><line x1="1036.9" y1="93.3" x2="1040.8" y2="93.3" stroke="#5131a8" stroke-width="0.9" stroke-linecap="round"/><path d="M1033.5 107.5 Q1039.1 107.5 1039.1 103.5 V98.3" fill="none" stroke="#4f3497" stroke-width="2.3"/><path d="M1034.7 102 L1039.1 97.5 L1043.5 102" fill="none" stroke="#4f3497" stroke-width="2.2"/><rect x="1124.8" y="82.3" width="23.8" height="31" rx="2" fill="#fff" stroke="#666" stroke-width="1"/><path d="M1126.8 82 H1146.6 Q1148.9 82 1148.9 84.3 V86.8 H1124.5 V84.3 Q1124.5 82 1126.8 82 Z" fill="#4f3497"/><path d="M1128.1 93.3 H1132.5 L1135.3 96.1 V103.9 Q1135.3 105.4 1133.8 105.4 H1128.1 Q1126.6 105.4 1126.6 103.9 V94.8 Q1126.6 93.3 1128.1 93.3 Z" fill="#fff" stroke="#666" stroke-width="0.9"/><path d="M1132.5 93.3 V96.1 H1135.3" fill="none" stroke="#666" stroke-width="0.9"/><path d="M1139.2 93.3 H1143.5 L1146.3 96.1 V103.9 Q1146.3 105.4 1144.8 105.4 H1139.2 Q1137.7 105.4 1137.7 103.9 V94.8 Q1137.7 93.3 1139.2 93.3 Z" fill="#fff" stroke="#666" stroke-width="0.9"/><path d="M1143.5 93.3 V96.1 H1146.3" fill="none" stroke="#666" stroke-width="0.9"/><line x1="1128.6" y1="98.6" x2="1133.3" y2="98.6" stroke="#5131a8" stroke-width="1.1" stroke-linecap="round"/><line x1="1128.6" y1="100.6" x2="1133.3" y2="100.6" stroke="#5131a8" stroke-width="1.1" stroke-linecap="round"/><line x1="1128.6" y1="102.6" x2="1133.3" y2="102.6" stroke="#5131a8" stroke-width="1.1" stroke-linecap="round"/><line x1="1139.7" y1="98.6" x2="1144.3" y2="98.6" stroke="#5131a8" stroke-width="1.1" stroke-linecap="round"/><line x1="1139.7" y1="100.6" x2="1144.3" y2="100.6" stroke="#5131a8" stroke-width="1.1" stroke-linecap="round"/><line x1="1139.7" y1="102.6" x2="1144.3" y2="102.6" stroke="#5131a8" stroke-width="1.1" stroke-linecap="round"/><path d="M1150.5 83.5 Q1150.5 82.3 1151.7 82.3 H1155.5 L1157 83.5 H1163.2 V85.5 H1150.5 Z" fill="#9c7432"/><rect x="1150.5" y="85.4" width="12.7" height="8.2" rx="0.5" fill="#e8b061"/><rect x="1150.5" y="85.4" width="12.7" height="0.8" fill="#f3d9a8"/><path d="M1151.5 88.8 H1163" stroke="#8a8a8a" stroke-width="0.9" stroke-dasharray="1.1 0.9"/><path d="M1150.4 109.8 Q1157.6 110 1157.6 104.5 V98.5" fill="none" stroke="#4f3497" stroke-width="2.5"/><path d="M1152.3 102.6 L1157.5 97.4 L1162.6 102.6" fill="none" stroke="#4f3497" stroke-width="2.4"/><path d="M1270.8 82.2 Q1266 82.6 1263 83.8 L1268.6 89.8 Q1270.3 87 1270.8 82.2 Z" fill="#5131a8"/><path d="M1261.5 84.6 L1269 91.6 Q1266.5 96 1262.4 98.6 L1254.2 90.6 Q1257.2 86.8 1261.5 84.6 Z" fill="#e8b061"/><circle cx="1261.4" cy="91.5" r="2.7" fill="#fff"/><path d="M1253.2 92.4 L1260.4 99.6 L1256.9 103.6 L1256.8 108.2 L1252.6 112.2 L1251 107.6 L1247.5 107 L1245 102.4 L1240.5 100.6 L1244 96.4 L1249.6 96.2 Z" fill="#5131a8"/><path d="M1243.4 104.2 L1241.4 111.4 L1248.9 109.4 L1247.6 108.9 L1243.6 109.6 L1244.6 104.6 Z" fill="#5131a8" stroke="#5131a8" stroke-width="0.6"/><path d="M1239.4 110.4 Q1239.6 113.4 1242.6 113.5" fill="none" stroke="#5131a8" stroke-width="1"/><path d="M1314.2 95.6 Q1314 88 1319.5 87.3 Q1322.5 87 1326 89.8 Q1329.5 92.6 1332 91.6 Q1336 90 1336.6 85" fill="none" stroke="#8a8a8a" stroke-width="0.8"/><rect x="1310.8" y="95.9" width="29.7" height="14.9" rx="2.2" fill="#fff" stroke="#a6a6a6" stroke-width="1.1"/><rect x="1312.5" y="97.8" width="1.8" height="1.6" fill="#9a9a9a"/><rect x="1319.0" y="97.8" width="1.8" height="1.6" fill="#9a9a9a"/><rect x="1322.1999999999998" y="97.8" width="1.8" height="1.6" fill="#9a9a9a"/><rect x="1325.3999999999999" y="97.8" width="1.8" height="1.6" fill="#9a9a9a"/><rect x="1328.8" y="97.8" width="1.8" height="1.6" fill="#9a9a9a"/><rect x="1336.1999999999998" y="97.8" width="1.8" height="1.6" fill="#9a9a9a"/><rect x="1312.5" y="100.9" width="1.8" height="1.6" fill="#9a9a9a"/><rect x="1315.6999999999998" y="100.9" width="1.8" height="1.6" fill="#9a9a9a"/><rect x="1319.0" y="100.9" width="1.8" height="1.6" fill="#9a9a9a"/><rect x="1322.1999999999998" y="100.9" width="1.8" height="1.6" fill="#9a9a9a"/><rect x="1336.1999999999998" y="100.9" width="1.8" height="1.6" fill="#9a9a9a"/><rect x="1319.0" y="104.0" width="1.8" height="1.6" fill="#9a9a9a"/><rect x="1322.1999999999998" y="104.0" width="1.8" height="1.6" fill="#9a9a9a"/><rect x="1325.3999999999999" y="104.0" width="1.8" height="1.6" fill="#9a9a9a"/><rect x="1336.1999999999998" y="104.0" width="1.8" height="1.6" fill="#9a9a9a"/><rect x="1312.5" y="107.10000000000001" width="1.8" height="1.6" fill="#9a9a9a"/><rect x="1315.6999999999998" y="107.10000000000001" width="1.8" height="1.6" fill="#9a9a9a"/><rect x="1333.1" y="107.10000000000001" width="1.8" height="1.6" fill="#9a9a9a"/><rect x="1336.1999999999998" y="107.10000000000001" width="1.8" height="1.6" fill="#9a9a9a"/><path d="M1325.7 100.9 H1330.6 V105.6 H1329 V102.5 H1325.7 Z" fill="#9a9a9a"/><rect x="1312.8" y="104" width="4.9" height="1.6" rx="0.5" fill="#9a9a9a"/><rect x="1319.3" y="107.1" width="11.4" height="1.6" rx="0.5" fill="#9a9a9a"/><rect x="1394.6" y="82.4" width="24.8" height="28.2" rx="2" fill="#fff" stroke="#a6a6a6" stroke-width="1.3"/><rect x="1398.4" y="86.2" width="17.6" height="5.4" rx="0.8" fill="#a6a6a6"/><rect x="1398.4" y="95.3" width="3.5" height="3.4" fill="#a6a6a6"/><rect x="1405.2" y="95.3" width="3.5" height="3.4" fill="#a6a6a6"/><rect x="1412" y="95.3" width="3.5" height="3.4" fill="#a6a6a6"/><rect x="1398.4" y="101.5" width="3.5" height="3.4" fill="#a6a6a6"/><rect x="1405.2" y="101.5" width="3.5" height="3.4" fill="#a6a6a6"/><circle cx="1417.1" cy="106.9" r="7.4" fill="#fff"/><circle cx="1417.1" cy="106.9" r="5.9" fill="none" stroke="#a6a6a6" stroke-width="1.5"/><circle cx="1416.8" cy="107.2" r="3.1" fill="#a6a6a6"/><path d="M1418.6 103.6 L1422.2 103 L1420.6 106.6 Z" fill="#a6a6a6" stroke="#fff" stroke-width="0.7"/><rect x="2.0" y="165" width="7.6375" height="20.8" rx="1.625" fill="#5131a8"/><rect x="3.21875" y="167.275" width="5.2" height="9.668750000000001" rx="0.8125" fill="#fff"/><rect x="3.86875" y="168.778125" width="3.9" height="1.21875" rx="0.4875" fill="#4a4a4a"/><rect x="3.86875" y="171.703125" width="3.9" height="1.21875" rx="0.4875" fill="#4a4a4a"/><rect x="3.86875" y="174.546875" width="3.9" height="1.21875" rx="0.4875" fill="#4a4a4a"/><circle cx="5.81875" cy="181.81875" r="2.3562499999999997" fill="#fff"/><rect x="11.1" y="165" width="7.6375" height="20.8" rx="1.625" fill="#e9c136"/><rect x="12.31875" y="167.275" width="5.2" height="9.668750000000001" rx="0.8125" fill="#fff"/><rect x="12.96875" y="168.778125" width="3.9" height="1.21875" rx="0.4875" fill="#4a4a4a"/><rect x="12.96875" y="171.703125" width="3.9" height="1.21875" rx="0.4875" fill="#4a4a4a"/><rect x="12.96875" y="174.546875" width="3.9" height="1.21875" rx="0.4875" fill="#4a4a4a"/><circle cx="14.91875" cy="181.81875" r="2.3562499999999997" fill="#fff"/><rect x="20.3625" y="165" width="7.6375" height="20.8" rx="1.625" fill="#5131a8"/><rect x="21.58125" y="167.275" width="5.2" height="9.668750000000001" rx="0.8125" fill="#fff"/><rect x="22.23125" y="168.778125" width="3.9" height="1.21875" rx="0.4875" fill="#4a4a4a"/><rect x="22.23125" y="171.703125" width="3.9" height="1.21875" rx="0.4875" fill="#4a4a4a"/><rect x="22.23125" y="174.546875" width="3.9" height="1.21875" rx="0.4875" fill="#4a4a4a"/><circle cx="24.181250000000002" cy="181.81875" r="2.3562499999999997" fill="#fff"/><rect x="2" y="186.9375" width="26.0" height="2.9250000000000003" rx="0.65" fill="#e8b061"/><path d="M9.8 200.03750000000002 V197.60000000000002 Q9.8 196.70625 10.775 196.70625 H19.3875 Q20.3625 196.70625 20.3625 197.60000000000002 V200.03750000000002" fill="none" stroke="#6a6a6a" stroke-width="0.89375"/><rect x="2" y="200.11875" width="26.0" height="21.125" rx="2.03125" fill="#5131a8"/><rect x="2" y="209.78750000000002" width="26.0" height="1.625" fill="#fff"/><rect x="11.75" y="206.61875" width="6.5" height="8.53125" rx="0.65" fill="#fff"/><rect x="12.80625" y="207.675" width="4.3875" height="6.41875" fill="#e8b061"/><path d="M2.50 231.73 Q2.50 230.30 3.93 230.30 H26.57 Q28.00 230.30 28.00 231.73 V247.83 Q28.00 249.11 26.41 249.11 H22.82 L21.87 252.62 H3.93 Q2.50 252.62 2.50 251.18 Z" fill="#fff" stroke="#777" stroke-width="0.797"/><path d="M2.50 233.73 V231.73 Q2.50 230.30 3.93 230.30 H26.57 Q28.00 230.30 28.00 231.73 V233.73 Z" fill="#5131a8"/><line x1="5.13" y1="235.72" x2="25.37" y2="235.72" stroke="#6a6a6a" stroke-width="1.20" stroke-linecap="round"/><line x1="5.29" y1="238.91" x2="10.47" y2="238.91" stroke="#b5b5b5" stroke-width="1.35" stroke-linecap="round"/><line x1="12.46" y1="238.91" x2="17.64" y2="238.91" stroke="#b5b5b5" stroke-width="1.35" stroke-linecap="round"/><line x1="19.64" y1="238.91" x2="25.21" y2="238.91" stroke="#5131a8" stroke-width="1.35" stroke-linecap="round"/><line x1="5.29" y1="241.86" x2="10.47" y2="241.86" stroke="#b5b5b5" stroke-width="1.35" stroke-linecap="round"/><line x1="12.46" y1="241.86" x2="17.64" y2="241.86" stroke="#b5b5b5" stroke-width="1.35" stroke-linecap="round"/><line x1="19.64" y1="241.86" x2="25.21" y2="241.86" stroke="#5131a8" stroke-width="1.35" stroke-linecap="round"/><line x1="5.29" y1="244.57" x2="10.47" y2="244.57" stroke="#b5b5b5" stroke-width="1.35" stroke-linecap="round"/><line x1="12.46" y1="244.57" x2="17.64" y2="244.57" stroke="#b5b5b5" stroke-width="1.35" stroke-linecap="round"/><line x1="19.64" y1="244.57" x2="25.21" y2="244.57" stroke="#5131a8" stroke-width="1.35" stroke-linecap="round"/><path d="M11.67 252.62 L12.30 250.38 H16.45 L17.09 252.62 M17.09 252.62 L17.64 250.38 H21.87 L22.35 251.82" fill="#fff" stroke="#777" stroke-width="0.72"/><path d="M90 172 L100 182 M100 172 L90 182" stroke="#8c8c8c" stroke-width="2.4"/><path d="M113.5 177 L117.5 181 L125 173.5" fill="none" stroke="#a8a8a8" stroke-width="2.3"/><text x="135" y="183.6" font-family="Liberation Sans" font-weight="700" font-size="19.5" fill="#7d7d7d" stroke="#7d7d7d" stroke-width="0.4" textLength="15.2" lengthAdjust="spacingAndGlyphs">fx</text><path d="M43.6 271.2 L48 275.6 L52.4 271.2" fill="none" stroke="#fff" stroke-width="1.3"/><path d="M46 320.3 L50.8 325.1 L46 329.90000000000003" fill="none" stroke="#4a2aa8" stroke-width="1.5"/><path d="M68 320.3 L72.8 325.1 L68 329.90000000000003" fill="none" stroke="#4a2aa8" stroke-width="1.5"/><path d="M41.2 343.6 A4.9 4.9 0 0 0 42.6 352.3" fill="none" stroke="#0f8a22" stroke-width="1.2"/><path d="M38.3 341.9 L42.3 341.9 L41.6 345.8 Z" fill="#0f8a22"/><path d="M44.4 342.6 A4.9 4.9 0 0 1 46.2 351" fill="none" stroke="#0f8a22" stroke-width="1.2"/><path d="M45.1 349.1 L45.1 352.9 L49 352.9 Z" fill="#0f8a22"/><path d="M41.2 347.4 L42.6 349.6 L45.6 346.4" fill="none" stroke="#0f8a22" stroke-width="1.1"/><path d="M67.5 361.3 L72.3 366.1 L67.5 370.90000000000003" fill="none" stroke="#4a2aa8" stroke-width="1.5"/><path d="M43.5 387.5 L48.3 392.3 L53.1 387.5" fill="none" stroke="#4a2aa8" stroke-width="1.5"/><path d="M197.75 389.05 H207.25 L202.5 393.55 Z" fill="#555"/><path d="M46 409.5 L50.8 414.3 L46 419.1" fill="none" stroke="#4a2aa8" stroke-width="1.5"/><path d="M197.75 413.05 H207.25 L202.5 417.55 Z" fill="#555"/><path d="M46 433.5 L50.8 438.3 L46 443.1" fill="none" stroke="#4a2aa8" stroke-width="1.5"/><path d="M197.75 437.05 H207.25 L202.5 441.55 Z" fill="#555"/><path d="M46 457.5 L50.8 462.3 L46 467.1" fill="none" stroke="#4a2aa8" stroke-width="1.5"/><path d="M197.75 461.05 H207.25 L202.5 465.55 Z" fill="#555"/><path d="M197.75 485.05 H207.25 L202.5 489.55 Z" fill="#555"/><path d="M1098.25 485.05 H1107.75 L1103 489.55 Z" fill="#555"/><path d="M43.5 507.5 L48.3 512.3 L53.1 507.5" fill="none" stroke="#4a2aa8" stroke-width="1.5"/><path d="M197.75 509.05 H207.25 L202.5 513.55 Z" fill="#555"/><path d="M197.75 533.05 H207.25 L202.5 537.55 Z" fill="#555"/><path d="M1098.25 533.05 H1107.75 L1103 537.55 Z" fill="#555"/><path d="M197.75 557.05 H207.25 L202.5 561.55 Z" fill="#555"/><path d="M1098.25 557.05 H1107.75 L1103 561.55 Z" fill="#555"/><path d="M197.75 581.05 H207.25 L202.5 585.55 Z" fill="#555"/><path d="M1098.25 581.05 H1107.75 L1103 585.55 Z" fill="#555"/><path d="M197.75 605.05 H207.25 L202.5 609.55 Z" fill="#555"/><path d="M1098.25 605.05 H1107.75 L1103 609.55 Z" fill="#555"/><path d="M197.75 629.05 H207.25 L202.5 633.55 Z" fill="#555"/><path d="M1098.25 629.05 H1107.75 L1103 633.55 Z" fill="#555"/><path d="M661.5 588 V598.7 M656.2 593.3 H666.9" stroke="#3f9f6e" stroke-width="1.3"/><path d="M655.2 613 Q655.2 611.3 656.8 611.3 H659.6 L661 612.7 H668 V614.2 H655.2 Z" fill="#9c7432"/><rect x="655.2" y="614.2" width="12.8" height="0.6" fill="#f3d9a8"/><rect x="655.2" y="614.8" width="12.8" height="8.3" rx="0.5" fill="#e6b465"/><rect x="656" y="642.5" width="11" height="2" rx="0.8" fill="#cd4b2f"/><rect x="659.5" y="641.5" width="4" height="1.5" fill="#cd4b2f"/><path d="M656.8 645.5 H666.2 L665.7 653 Q665.6 654.2 664.4 654.2 H658.6 Q657.4 654.2 657.3 653 Z" fill="#cd4b2f"/><path d="M58 1020.5 L64.8 1014.5 L71.6 1020.5 Z" fill="#f3d39a"/><path d="M58.8 1021 V1028.4 M62.6 1021 V1028.4 M67 1021 V1028.4 M70.8 1021 V1028.4" fill="none" stroke="#ecc88a" stroke-width="1.3"/><path d="M56.4 1020.3 L64.8 1012.3 L73.4 1020.3" fill="none" stroke="#5131a8" stroke-width="1.1"/><rect x="57.2" y="1028.8" width="15.4" height="1" fill="#7a7a7a"/><path d="M172 1016.3 L181.5 1025.8 M181.5 1016.3 L172 1025.8" stroke="#222" stroke-width="1.6"/><path d="M1763 1031.5 V1037 H1756.5 Q1762.2 1036.2 1763 1031.5 Z" fill="#0d1f8c"/></svg></body></html>
